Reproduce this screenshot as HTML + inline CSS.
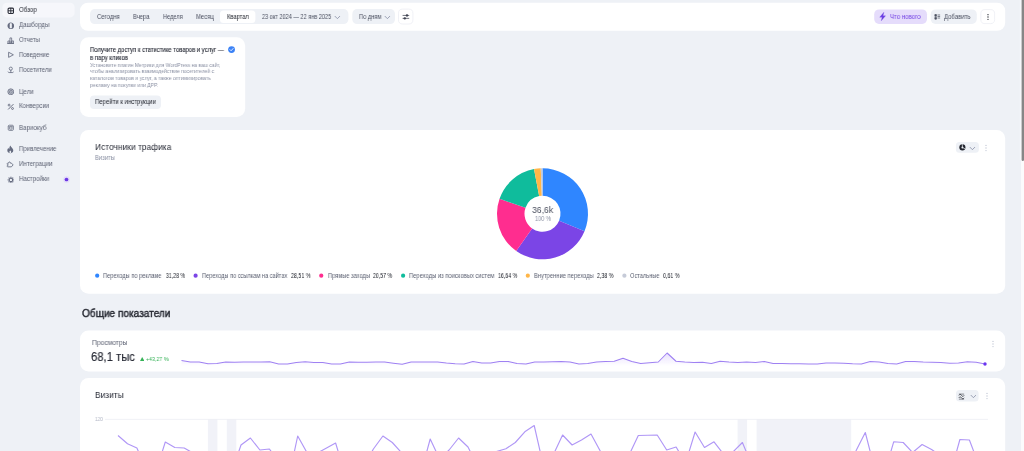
<!DOCTYPE html>
<html lang="ru">
<head>
<meta charset="utf-8">
<title>Обзор — Метрика</title>
<style>
*{box-sizing:border-box;margin:0;padding:0}
html,body{width:1024px;height:451px;overflow:hidden}
body{background:#eef1f6;font-family:"Liberation Sans",sans-serif;color:#22252e;position:relative}
.a{position:absolute}
.t{position:absolute;white-space:nowrap;transform-origin:0 50%;will-change:transform}

</style>
</head>
<body>
<!-- cards, pills and buttons: one anti-aliased vector layer -->
<svg class="a" style="left:0;top:0;width:1024px;height:451px" viewBox="0 0 1024 451">
<rect x="2.40" y="2.80" width="72.20" height="14.60" rx="4.50" fill="#f6f7fb"/>
<rect x="80.00" y="2.70" width="925.20" height="28.15" rx="8.00" fill="#fff"/>
<rect x="90.00" y="9.10" width="258.40" height="15.00" rx="4.80" fill="#eef1f6"/>
<rect x="220.00" y="10.40" width="35.40" height="12.60" rx="3.50" fill="#fff"/>
<rect x="352.30" y="9.10" width="42.70" height="15.00" rx="4.80" fill="#eef1f6"/>
<rect x="398.50" y="9.10" width="14.40" height="14.90" rx="4.10" fill="#fff" stroke="#eceef4" stroke-width="0.8"/>
<rect x="874.20" y="9.40" width="52.80" height="14.50" rx="4.80" fill="#e5dcfb"/>
<rect x="930.70" y="9.40" width="46.10" height="14.50" rx="4.80" fill="#eef1f6"/>
<rect x="980.80" y="9.60" width="13.80" height="14.00" rx="4.10" fill="#fff" stroke="#eceef4" stroke-width="0.8"/>
<rect x="80.00" y="37.30" width="165.20" height="79.70" rx="8.50" fill="#fff"/>
<rect x="90.00" y="95.60" width="71.00" height="13.40" rx="4.00" fill="#eef1f6"/>
<rect x="80.00" y="129.90" width="925.20" height="163.90" rx="8.50" fill="#fff"/>
<rect x="955.90" y="141.90" width="23.00" height="10.90" rx="3.50" fill="#eef1f6"/>
<rect x="80.00" y="330.60" width="925.20" height="40.80" rx="8.50" fill="#fff"/>
<rect x="80.00" y="378.00" width="925.20" height="90.00" rx="8.50" fill="#fff"/>
<rect x="956.00" y="390.00" width="22.60" height="11.40" rx="3.50" fill="#eef1f6"/>
<rect x="1021.00" y="0.00" width="3.00" height="451.00" rx="0.00" fill="#fbfbfc"/>
<rect x="1019.90" y="0.00" width="1.70" height="160.00" rx="0.00" fill="#f7f8fb"/>
<path d="M1021.60 0.00h2.40v159.80a1.2 1.2 0 0 1 -1.2 1.2h-0.00a1.2 1.2 0 0 1 -1.2 -1.2z" fill="#878787"/>
</svg>
<!-- ============ SIDEBAR ============ -->
<svg class="a" style="left:6.60px;top:6.80px;width:7.6px;height:7.6px;color:#2c2f3a" viewBox="0 0 16 16"><rect x="2.300" y="2.300" width="11.400" height="11.400" rx="2.600" fill="none" stroke="currentColor" stroke-width="2.300"/><path d="M8 2v12M2 8h12" stroke="currentColor" stroke-width="2" fill="none"/></svg>
<div class="t" style="left:18.60px;top:5px;font-size:6.93px;line-height:9px;color:#22252e;transform:scaleX(0.885)">Обзор</div>
<svg class="a" style="left:6.60px;top:21.60px;width:7.6px;height:7.6px;color:#666c80" viewBox="0 0 16 16"><path fill-rule="evenodd" d="M8 .9c4.100 0 7 3 7 7.100s-2.900 7.100-7 7.100S1 12.100 1 8 3.900.9 8 .9zM5.800 3.600v8.800c0 1.300 4.400 1.300 4.400 0V3.600c0-1.300-4.400-1.300-4.400 0z" fill="currentColor"/></svg>
<div class="t" style="left:18.60px;top:20px;font-size:6.93px;line-height:9px;color:#5d6273;transform:scaleX(0.873)">Дашборды</div>
<svg class="a" style="left:6.60px;top:36.60px;width:7.6px;height:7.6px;color:#666c80" viewBox="0 0 16 16"><path d="M6.200 2h3.600v11.200H6.200zM2 8.400h4.200v4.800H2zM9.800 8.400H14v4.800H9.800z" fill="none" stroke="currentColor" stroke-width="1.700" stroke-linejoin="round"/><path d="M1.200 13.600h13.600" stroke="currentColor" stroke-width="1.800" stroke-linecap="round"/></svg>
<div class="t" style="left:18.60px;top:35px;font-size:6.93px;line-height:9px;color:#5d6273;transform:scaleX(0.873)">Отчеты</div>
<svg class="a" style="left:6.60px;top:51.40px;width:7.6px;height:7.6px;color:#666c80" viewBox="0 0 16 16"><path d="M3.400 2.600 13.400 8 3.400 13.400z" fill="none" stroke="currentColor" stroke-width="1.800" stroke-linejoin="round"/></svg>
<div class="t" style="left:18.60px;top:50px;font-size:6.93px;line-height:9px;color:#5d6273;transform:scaleX(0.849)">Поведение</div>
<svg class="a" style="left:6.60px;top:66.40px;width:7.6px;height:7.6px;color:#666c80" viewBox="0 0 16 16"><circle cx="8" cy="5.600" r="3.300" fill="none" stroke="currentColor" stroke-width="1.700"/><path d="M2.400 12.600c.4.900 1 1.200 2 1.200h7.200c1 0 1.600-.3 2-1.200M8 9v4" fill="none" stroke="currentColor" stroke-width="1.700" stroke-linecap="round"/></svg>
<div class="t" style="left:18.60px;top:65px;font-size:6.93px;line-height:9px;color:#5d6273;transform:scaleX(0.873)">Посетители</div>
<svg class="a" style="left:6.60px;top:87.90px;width:7.6px;height:7.6px;color:#666c80" viewBox="0 0 16 16"><circle cx="8" cy="8" r="6.200" fill="currentColor" fill-opacity=".3" stroke="currentColor" stroke-width="1.700"/><circle cx="8" cy="8" r="3.100" fill="none" stroke="currentColor" stroke-width="1.500"/><circle cx="8" cy="8" r="1" fill="currentColor"/></svg>
<div class="t" style="left:18.60px;top:87px;font-size:6.93px;line-height:9px;color:#5d6273;transform:scaleX(0.883)">Цели</div>
<svg class="a" style="left:6.60px;top:102.80px;width:7.6px;height:7.6px;color:#666c80" viewBox="0 0 16 16"><path d="M13 3 3 13" stroke="currentColor" stroke-width="2.100" stroke-linecap="round"/><circle cx="4.400" cy="4.400" r="2" fill="none" stroke="currentColor" stroke-width="1.900"/><circle cx="11.600" cy="11.600" r="2" fill="none" stroke="currentColor" stroke-width="1.900"/></svg>
<div class="t" style="left:18.60px;top:101px;font-size:6.93px;line-height:9px;color:#5d6273;transform:scaleX(0.883)">Конверсии</div>
<svg class="a" style="left:6.60px;top:124.20px;width:7.6px;height:7.6px;color:#666c80" viewBox="0 0 16 16"><rect x="2.600" y="2.600" width="10.800" height="10.800" rx="2.200" fill="none" stroke="currentColor" stroke-width="1.700"/><path d="M5.400 6.200h5.200v4.600H5.400z" fill="none" stroke="currentColor" stroke-width="1.400"/><path d="M2.600 5.400h10.800" stroke="currentColor" stroke-width="1.200"/></svg>
<div class="t" style="left:18.60px;top:123px;font-size:6.93px;line-height:9px;color:#5d6273;transform:scaleX(0.891)">Вариокуб</div>
<svg class="a" style="left:6.10px;top:145.30px;width:8.6px;height:8.6px;color:#666c80" viewBox="0 0 16 16"><path d="M8.300 1c.5 2.300 2.100 3.300 3.500 5 1.300 1.600 2 3.200 1.600 5.200-.5 2.500-2.700 4-5.400 4s-4.900-1.500-5.400-4c-.5-2.400.5-4.400 2-5.900.2 1.300.7 2.200 1.500 2.700-.2-2.800.6-5.300 2.200-7z" fill="currentColor"/><path d="M8 10.200c1.300 1.300 2 2.400 1.500 3.600-.3.700-.9 1-1.500 1s-1.200-.3-1.500-1c-.5-1.200.2-2.300 1.500-3.600z" fill="#eef1f6"/></svg>
<div class="t" style="left:18.60px;top:144px;font-size:6.93px;line-height:9px;color:#5d6273;transform:scaleX(0.870)">Привлечение</div>
<svg class="a" style="left:6.30px;top:160.40px;width:8.2px;height:8.2px;color:#666c80" viewBox="0 0 16 16"><path d="M3.200 6h2.200c-1-2.900 3.800-2.900 2.900 0h2.200l3.400 3.600-3.400 3.800H3.200c-.4 0-.7-.3-.7-.7v-1.800c2.400.8 2.400-3 0-2.400V6.700c0-.4.300-.7.700-.7z" fill="none" stroke="currentColor" stroke-width="1.700" stroke-linejoin="round"/></svg>
<div class="t" style="left:18.60px;top:159px;font-size:6.93px;line-height:9px;color:#5d6273;transform:scaleX(0.889)">Интеграции</div>
<svg class="a" style="left:6.50px;top:175.60px;width:7.8px;height:7.8px;color:#666c80" viewBox="0 0 16 16"><circle cx="8" cy="8" r="3.600" fill="none" stroke="currentColor" stroke-width="2.400"/><path d="M13.00 8.00L14.70 8.00M11.54 11.54L12.74 12.74M8.00 13.00L8.00 14.70M4.46 11.54L3.26 12.74M3.00 8.00L1.30 8.00M4.46 4.46L3.26 3.26M8.00 3.00L8.00 1.30M11.54 4.46L12.74 3.26" stroke="currentColor" stroke-width="2.600"/></svg>
<div class="t" style="left:18.60px;top:174px;font-size:6.93px;line-height:9px;color:#5d6273;transform:scaleX(0.889)">Настройки</div>
<svg class="a" style="left:62.100px;top:174.600px;width:9px;height:9px" viewBox="0 0 18 18"><circle cx="9" cy="9" r="6.400" fill="#e3dbfa"/><circle cx="9" cy="9" r="3.700" fill="#6c38e4"/></svg>

<!-- ============ TOP BAR ============ -->
<div class="t" style="left:97.00px;top:12px;font-size:6.93px;line-height:9px;color:#4c5161;transform:scaleX(0.859)">Сегодня</div>
<div class="t" style="left:132.80px;top:12px;font-size:6.93px;line-height:9px;color:#4c5161;transform:scaleX(0.839)">Вчера</div>
<div class="t" style="left:162.90px;top:12px;font-size:6.93px;line-height:9px;color:#4c5161;transform:scaleX(0.816)">Неделя</div>
<div class="t" style="left:195.70px;top:12px;font-size:6.93px;line-height:9px;color:#4c5161;transform:scaleX(0.843)">Месяц</div>
<div class="t" style="left:227.00px;top:12px;font-size:6.93px;line-height:9px;color:#22252e;transform:scaleX(0.833)">Квартал</div>
<div class="t" style="left:262.00px;top:12px;font-size:6.93px;line-height:9px;color:#4c5161;transform:scaleX(0.804)">23 окт 2024 — 22 янв 2025</div>
<svg class="a" style="left:333.9px;top:14.0px;width:6.8px;height:6.8px" viewBox="0 0 16 16"><path d="M2.500 5.500 8 11l5.500-5.500" fill="none" stroke="#8b91a8" stroke-width="2" stroke-linecap="round" stroke-linejoin="round"/></svg>
<div class="t" style="left:358.60px;top:12px;font-size:6.93px;line-height:9px;color:#4c5161;transform:scaleX(0.826)">По дням</div>
<svg class="a" style="left:383.9px;top:14.0px;width:6.8px;height:6.8px" viewBox="0 0 16 16"><path d="M2.500 5.500 8 11l5.500-5.500" fill="none" stroke="#8b91a8" stroke-width="2" stroke-linecap="round" stroke-linejoin="round"/></svg>
<svg class="a" style="left:402px;top:12.900px;width:7.800px;height:7.800px" viewBox="0 0 16 16"><path d="M2 5h12M2 11h12" stroke="#3f4351" stroke-width="1.500" stroke-linecap="round"/><circle cx="10.200" cy="5" r="2.400" fill="#3f4351"/><circle cx="5.800" cy="11" r="2.400" fill="#3f4351"/></svg>
<svg class="a" style="left:878.600px;top:12.200px;width:7.200px;height:9px" viewBox="0 0 16 20"><path d="M10.800.6 1.600 11.600h5.400L5 19.600l9.600-11.200H9z" fill="#6d3fe3" stroke="#6d3fe3" stroke-width=".6" stroke-linejoin="round"/></svg>
<div class="t" style="left:889.80px;top:12px;font-size:6.93px;line-height:9px;color:#7443e4;transform:scaleX(0.876)">Что нового</div>
<svg class="a" style="left:933.800px;top:13px;width:7px;height:7px" viewBox="0 0 16 16"><path d="M2 3.500h3.500v4H2zM2 10h3.500v4H2zM8 4.500h6M8 8h6M8 11.500h6" fill="#4c5161" stroke="#4c5161" stroke-width="1.600"/></svg>
<div class="t" style="left:944.20px;top:12px;font-size:6.93px;line-height:9px;color:#4c5161;transform:scaleX(0.866)">Добавить</div>
<svg class="a" style="left:986.300px;top:13.100px;width:4px;height:8px" viewBox="0 0 8 16"><circle cx="4" cy="3.400" r="1.300" fill="#22252e"/><circle cx="4" cy="8" r="1.300" fill="#22252e"/><circle cx="4" cy="12.600" r="1.300" fill="#22252e"/></svg>

<!-- ============ INFO CARD ============ -->
<div class="t" style="left:90.00px;top:45px;font-size:6.93px;line-height:9px;color:#282b36;transform:scaleX(0.851);-webkit-text-stroke:0.12px #282b36">Получите доступ к статистике товаров и услуг —</div>
<div class="t" style="left:90.00px;top:53px;font-size:6.93px;line-height:9px;color:#282b36;transform:scaleX(0.864);-webkit-text-stroke:0.12px #282b36">в пару кликов</div>
<svg class="a" style="left:228.300px;top:46.450px;width:7.100px;height:7.100px" viewBox="0 0 16 16"><circle cx="8" cy="8" r="7.700" fill="#3b82f6"/><path d="M4.600 8.300 7 10.700l4.500-5" fill="none" stroke="#fff" stroke-width="1.900" stroke-linecap="round" stroke-linejoin="round"/></svg>
<div class="t" style="left:90.00px;top:61px;font-size:5.87px;line-height:8px;color:#8a90a3;transform:scaleX(0.850)">Установите плагин Метрики для WordPress на ваш сайт,</div>
<div class="t" style="left:90.00px;top:67px;font-size:5.87px;line-height:8px;color:#8a90a3;transform:scaleX(0.853)">чтобы анализировать взаимодействие посетителей с</div>
<div class="t" style="left:90.00px;top:74px;font-size:5.87px;line-height:8px;color:#8a90a3;transform:scaleX(0.858)">каталогом товаров и услуг, а также оптимизировать</div>
<div class="t" style="left:90.00px;top:81px;font-size:5.87px;line-height:8px;color:#8a90a3;transform:scaleX(0.857)">рекламу на покупки или ДРР.</div>
<div class="t" style="left:95.00px;top:97px;font-size:6.93px;line-height:9px;color:#22252e;transform:scaleX(0.864)">Перейти к инструкции</div>

<!-- ============ TRAFFIC SOURCES ============ -->
<div class="t" style="left:94.80px;top:140px;font-size:9.6px;line-height:13px;color:#2b2e39;transform:scaleX(0.877)">Источники трафика</div>
<div class="t" style="left:94.80px;top:153px;font-size:6.93px;line-height:9px;color:#8a90a3;transform:scaleX(0.845)">Визиты</div>
<svg class="a" style="left:958.800px;top:144.400px;width:6.800px;height:6.800px" viewBox="0 0 16 16"><circle cx="8" cy="8" r="7.200" fill="#22252e"/><path d="M8 8V0.500M8 8l6.500 3.600" stroke="#eef1f6" stroke-width="1.600"/><circle cx="8" cy="8" r="2.300" fill="#eef1f6"/></svg>
<svg class="a" style="left:969.3px;top:144.9px;width:6.8px;height:6.8px" viewBox="0 0 16 16"><path d="M2.500 5.500 8 11l5.500-5.500" fill="none" stroke="#8b91a8" stroke-width="2" stroke-linecap="round" stroke-linejoin="round"/></svg>
<svg class="a" style="left:984.1px;top:143.5px;width:4px;height:8px" viewBox="0 0 8 16"><circle cx="4" cy="2.800" r="1.4" fill="#c3c8d6"/><circle cx="4" cy="8" r="1.4" fill="#c3c8d6"/><circle cx="4" cy="13.200" r="1.4" fill="#c3c8d6"/></svg>
<svg class="a" style="left:0;top:0;width:1024px;height:451px" viewBox="0 0 1024 451"><path d="M542.50 168.30A45.5 45.5 0 0 1 584.50 231.30L559.12 220.72A18.0 18.0 0 0 0 542.50 195.80Z" fill="#2f86ff"/><path d="M584.50 231.30A45.5 45.5 0 0 1 516.23 250.95L532.11 228.50A18.0 18.0 0 0 0 559.12 220.72Z" fill="#7b45e6"/><path d="M516.23 250.95A45.5 45.5 0 0 1 499.56 198.74L525.51 207.84A18.0 18.0 0 0 0 532.11 228.50Z" fill="#ff2d8f"/><path d="M499.56 198.74A45.5 45.5 0 0 1 534.00 169.10L539.14 196.12A18.0 18.0 0 0 0 525.51 207.84Z" fill="#0fbc9c"/><path d="M534.00 169.10A45.5 45.5 0 0 1 540.76 168.33L541.81 195.81A18.0 18.0 0 0 0 539.14 196.12Z" fill="#ffb648"/><path d="M540.76 168.33A45.5 45.5 0 0 1 542.50 168.30L542.50 195.80A18.0 18.0 0 0 0 541.81 195.81Z" fill="#c6cbd8"/></svg>
<div class="t" style="left:531.90px;top:203px;font-size:9.6px;line-height:13px;color:#4a4f5e;transform:scaleX(0.898)">36,6k</div>
<div class="t" style="left:534.70px;top:214px;font-size:6.4px;line-height:9px;color:#8a90a3;transform:scaleX(0.877)">100 %</div>
<div class="t" style="left:103.40px;top:271px;font-size:6.93px;line-height:9px;color:#5c6172;transform:scaleX(0.821)">Переходы по рекламе</div>
<div class="t" style="left:166.10px;top:271px;font-size:6.93px;line-height:9px;color:#22252e;transform:scaleX(0.748)">31,28 %</div>
<div class="t" style="left:201.90px;top:271px;font-size:6.93px;line-height:9px;color:#5c6172;transform:scaleX(0.814)">Переходы по ссылкам на сайтах</div>
<div class="t" style="left:291.40px;top:271px;font-size:6.93px;line-height:9px;color:#22252e;transform:scaleX(0.773)">28,51 %</div>
<div class="t" style="left:327.80px;top:271px;font-size:6.93px;line-height:9px;color:#5c6172;transform:scaleX(0.820)">Прямые заходы</div>
<div class="t" style="left:373.25px;top:271px;font-size:6.93px;line-height:9px;color:#22252e;transform:scaleX(0.750)">20,57 %</div>
<div class="t" style="left:409.40px;top:271px;font-size:6.93px;line-height:9px;color:#5c6172;transform:scaleX(0.838)">Переходы из поисковых систем</div>
<div class="t" style="left:497.90px;top:271px;font-size:6.93px;line-height:9px;color:#22252e;transform:scaleX(0.764)">16,64 %</div>
<div class="t" style="left:534.00px;top:271px;font-size:6.93px;line-height:9px;color:#5c6172;transform:scaleX(0.838)">Внутренние переходы</div>
<div class="t" style="left:597.30px;top:271px;font-size:6.93px;line-height:9px;color:#22252e;transform:scaleX(0.765)">2,38 %</div>
<div class="t" style="left:630.00px;top:271px;font-size:6.93px;line-height:9px;color:#5c6172;transform:scaleX(0.815)">Остальные</div>
<div class="t" style="left:662.90px;top:271px;font-size:6.93px;line-height:9px;color:#22252e;transform:scaleX(0.770)">0,61 %</div>
<svg class="a" style="left:0;top:0;width:1024px;height:451px" viewBox="0 0 1024 451"><circle cx="97.2" cy="275.700" r="2.100" fill="#2f86ff"/><circle cx="195.6" cy="275.700" r="2.100" fill="#7b45e6"/><circle cx="321.25" cy="275.700" r="2.100" fill="#ff2d8f"/><circle cx="403.1" cy="275.700" r="2.100" fill="#0fbc9c"/><circle cx="527.8" cy="275.700" r="2.100" fill="#ffb648"/><circle cx="624.4" cy="275.700" r="2.100" fill="#c6cbd8"/></svg>

<!-- ============ TOTALS ============ -->
<div class="t" style="left:82.00px;top:306px;font-size:10.67px;line-height:14px;color:#22252e;transform:scaleX(0.946);-webkit-text-stroke:0.4px #22252e">Общие показатели</div>
<div class="t" style="left:91.70px;top:338px;font-size:6.93px;line-height:9px;color:#5c6172;transform:scaleX(0.970)">Просмотры</div>
<div class="t" style="left:91.40px;top:349px;font-size:12.0px;line-height:16px;color:#262934;transform:scaleX(0.938);-webkit-text-stroke:0.15px #262934">68,1 тыс</div>
<svg class="a" style="left:139.800px;top:356.800px;width:4.400px;height:3.900px" viewBox="0 0 10 9"><path d="M5 0 10 9H0z" fill="#35b257"/></svg>
<div class="t" style="left:146.35px;top:355px;font-size:5.87px;line-height:8px;color:#35b257;transform:scaleX(0.900)">+43,27 %</div>
<svg class="a" style="left:991.0px;top:339.6px;width:4px;height:8px" viewBox="0 0 8 16"><circle cx="4" cy="2.800" r="1.4" fill="#c3c8d6"/><circle cx="4" cy="8" r="1.4" fill="#c3c8d6"/><circle cx="4" cy="13.200" r="1.4" fill="#c3c8d6"/></svg>
<svg class="a" style="left:0;top:0;width:1024px;height:451px" viewBox="0 0 1024 451"><defs><linearGradient id="g1" gradientUnits="userSpaceOnUse" x1="0" y1="352" x2="0" y2="366"><stop offset="0" stop-color="#8b5cf6" stop-opacity=".2"/><stop offset="1" stop-color="#8b5cf6" stop-opacity="0"/></linearGradient></defs><path d="M181.5,360.50 L190.3,362.00 L199.2,362.00 L208.0,363.75 L216.8,363.50 L225.7,362.00 L234.5,362.20 L243.3,362.10 L252.1,362.00 L261.0,362.00 L269.8,361.80 L278.6,364.00 L287.5,364.00 L296.3,362.50 L305.1,361.75 L313.9,362.50 L322.8,362.50 L331.6,364.00 L340.4,364.00 L349.3,362.00 L358.1,362.20 L366.9,362.30 L375.8,362.10 L384.6,362.00 L393.4,363.20 L402.2,364.25 L411.1,362.00 L419.9,362.00 L428.7,362.00 L437.6,362.00 L446.4,363.00 L455.2,363.75 L464.1,364.00 L472.9,361.50 L481.7,363.00 L490.6,363.00 L499.4,361.50 L508.2,361.50 L517.0,363.50 L525.9,364.00 L534.7,362.00 L543.5,361.90 L552.4,361.70 L561.2,361.50 L570.0,362.00 L578.9,364.00 L587.7,363.50 L596.5,362.00 L605.3,361.50 L614.2,361.25 L623.0,358.25 L631.8,361.50 L640.7,363.50 L649.5,362.70 L658.3,362.00 L667.1,353.00 L676.0,361.25 L684.8,362.00 L693.6,362.50 L702.5,362.25 L711.3,363.50 L720.1,361.25 L729.0,362.00 L737.8,362.50 L746.6,362.00 L755.5,362.50 L764.3,361.50 L773.1,363.50 L781.9,363.60 L790.8,363.70 L799.6,363.80 L808.4,363.90 L817.3,364.00 L826.1,363.00 L834.9,363.00 L843.8,363.30 L852.6,363.75 L861.4,364.00 L870.2,361.50 L879.1,362.00 L887.9,363.50 L896.7,364.00 L905.6,361.50 L914.4,361.50 L923.2,362.00 L932.0,362.30 L940.9,362.60 L949.7,363.20 L958.5,363.00 L967.4,361.80 L976.2,362.20 L985.0,364.00 L985.0,369 L181.5,369Z" fill="url(#g1)"/><polyline points="181.5,360.50 190.3,362.00 199.2,362.00 208.0,363.75 216.8,363.50 225.7,362.00 234.5,362.20 243.3,362.10 252.1,362.00 261.0,362.00 269.8,361.80 278.6,364.00 287.5,364.00 296.3,362.50 305.1,361.75 313.9,362.50 322.8,362.50 331.6,364.00 340.4,364.00 349.3,362.00 358.1,362.20 366.9,362.30 375.8,362.10 384.6,362.00 393.4,363.20 402.2,364.25 411.1,362.00 419.9,362.00 428.7,362.00 437.6,362.00 446.4,363.00 455.2,363.75 464.1,364.00 472.9,361.50 481.7,363.00 490.6,363.00 499.4,361.50 508.2,361.50 517.0,363.50 525.9,364.00 534.7,362.00 543.5,361.90 552.4,361.70 561.2,361.50 570.0,362.00 578.9,364.00 587.7,363.50 596.5,362.00 605.3,361.50 614.2,361.25 623.0,358.25 631.8,361.50 640.7,363.50 649.5,362.70 658.3,362.00 667.1,353.00 676.0,361.25 684.8,362.00 693.6,362.50 702.5,362.25 711.3,363.50 720.1,361.25 729.0,362.00 737.8,362.50 746.6,362.00 755.5,362.50 764.3,361.50 773.1,363.50 781.9,363.60 790.8,363.70 799.6,363.80 808.4,363.90 817.3,364.00 826.1,363.00 834.9,363.00 843.8,363.30 852.6,363.75 861.4,364.00 870.2,361.50 879.1,362.00 887.9,363.50 896.7,364.00 905.6,361.50 914.4,361.50 923.2,362.00 932.0,362.30 940.9,362.60 949.7,363.20 958.5,363.00 967.4,361.80 976.2,362.20 985.0,364.00" fill="none" stroke="#9f81f2" stroke-width="1.050" stroke-linejoin="round"/><circle cx="985" cy="364" r="1.700" fill="#6a35f0"/></svg>
<div class="t" style="left:95.00px;top:388px;font-size:9.6px;line-height:13px;color:#2b2e39;transform:scaleX(0.872)">Визиты</div>
<svg class="a" style="left:958.300px;top:392.800px;width:7px;height:7px" viewBox="0 0 16 16"><path d="M2 5.500c2-3 4-3 6 0s4 3 6 0M2 11c2-3 4-3 6 0s4 3 6 0" fill="none" stroke="#22252e" stroke-width="1.700"/><path d="M2 14h12M2 2.500h12" stroke="#22252e" stroke-width="1.200"/></svg>
<svg class="a" style="left:969.5px;top:392.9px;width:6.8px;height:6.8px" viewBox="0 0 16 16"><path d="M2.500 5.500 8 11l5.500-5.500" fill="none" stroke="#8b91a8" stroke-width="2" stroke-linecap="round" stroke-linejoin="round"/></svg>
<svg class="a" style="left:984.7px;top:392.1px;width:4px;height:8px" viewBox="0 0 8 16"><circle cx="4" cy="2.800" r="1.4" fill="#c3c8d6"/><circle cx="4" cy="8" r="1.4" fill="#c3c8d6"/><circle cx="4" cy="13.200" r="1.4" fill="#c3c8d6"/></svg>
<div class="t" style="left:95.00px;top:415px;font-size:5.33px;line-height:8px;color:#b0b5c4;transform:scaleX(0.855)">120</div>
<svg class="a" style="left:0;top:0;width:1024px;height:451px" viewBox="0 0 1024 451"><rect x="207.9" y="419.400" width="9.5" height="40" fill="#f1f2f8"/><rect x="226.8" y="419.400" width="9.5" height="40" fill="#f1f2f8"/><rect x="737.6" y="419.400" width="9.5" height="40" fill="#f1f2f8"/><rect x="756.6" y="419.400" width="94.6" height="40" fill="#f1f2f8"/><path d="M105 419.400H988" stroke="#eceef4" stroke-width=".8"/><polyline points="118.0,435.5 127.5,443.8 136.9,448.0 146.4,470.0 155.8,472.0 165.3,442.0 174.8,447.5 184.2,448.0 193.7,453.4 203.1,470.0 212.6,480.0 222.1,480.0 231.5,473.0 241.0,445.0 250.4,438.0 259.9,450.0 269.4,449.0 278.8,462.0 288.3,480.0 297.7,436.0 307.2,453.0 316.7,453.4 326.1,448.2 335.6,443.0 345.0,474.0 354.5,480.0 364.0,466.0 373.4,449.0 382.9,436.0 392.3,442.5 401.8,453.0 411.3,470.0 420.7,474.0 430.2,439.0 439.6,459.0 449.1,450.0 458.6,438.0 468.0,447.0 477.5,466.0 486.9,466.0 496.4,451.5 505.9,448.8 515.3,442.5 524.8,431.8 534.2,425.5 543.7,467.0 553.2,455.0 562.6,435.0 572.1,445.0 581.5,440.0 591.0,434.0 600.5,451.5 609.9,470.0 619.4,475.0 628.8,455.6 638.3,435.5 647.8,435.2 657.2,435.0 666.7,450.0 676.1,447.0 685.6,463.0 695.1,432.0 704.5,447.5 714.0,441.8 723.4,454.0 732.9,452.0 742.4,442.5 751.8,465.0" fill="none" stroke="#b097f6" stroke-width="1.150" stroke-linejoin="round"/><polyline points="855.9,451.0 865.3,432.5 874.8,469.5 884.3,474.0 893.7,441.8 903.2,442.5 912.6,452.5 922.1,444.5 931.6,449.5 941.0,456.0 950.5,473.5 959.9,439.5 969.4,440.0 978.9,465.0" fill="none" stroke="#b097f6" stroke-width="1.150" stroke-linejoin="round"/></svg>

<!-- ============ SCROLLBAR ============ -->

</body>
</html>
